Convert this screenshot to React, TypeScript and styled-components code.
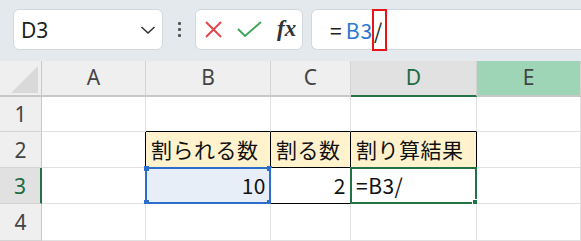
import React from "react";
import styled, { createGlobalStyle } from "styled-components";

const Global = createGlobalStyle`
  html, body { margin: 0; padding: 0; background: #fff; }
  body { width: 581px; height: 241px; overflow: hidden; font-family: "Noto Sans CJK JP", "Noto Sans", sans-serif; }
`;

const Page = styled.div`
  width: 581px;
  height: 241px;
  overflow: hidden;
  display: flex;
  flex-direction: column;
`;

const Toolbar = styled.div`
  height: 61px;
  flex: none;
  box-sizing: border-box;
  background: #e3e9ec;
  display: flex;
  align-items: flex-start;
  padding: 9px 0 0 13px;
`;

const Box = styled.div<{ $w: number }>`
  box-sizing: border-box;
  width: ${(p) => p.$w}px;
  height: 41px;
  flex: none;
  background: #fff;
  border: 1px solid #d3d8dc;
  border-radius: 6px;
  display: flex;
  align-items: center;
`;

const NameText = styled.span`
  flex: 1;
  padding-left: 7px;
  font-family: "Noto Sans", sans-serif;
  font-size: 21px;
  color: #222;
`;

const Chevron = styled.svg`
  margin-right: 6px;
`;

const Dots = styled.div`
  width: 3px;
  margin: 13px 14px 0 15px;
  display: flex;
  flex-direction: column;
  gap: 3px;
  span {
    width: 3px;
    height: 3px;
    background: #555;
    border-radius: 1px;
  }
`;

const FxGroup = styled(Box)`
  padding-left: 9px;
`;

const FxText = styled.span`
  font-family: "Liberation Serif", serif;
  font-style: italic;
  font-weight: bold;
  font-size: 23px;
  color: #333;
  margin-left: 14px;
  margin-top: -2px;
`;

const Formula = styled(Box)`
  margin-left: 8px;
  padding-left: 18px;
  border-right: none;
  border-radius: 6px 0 0 6px;
  font-size: 21px;
  letter-spacing: 1px;
  color: #222;
`;

const Eq = styled.span`
  padding-right: 3px;
`;

const Ref = styled.span`
  color: #2a78cf;
`;

const Caret = styled.span`
  position: relative;
  align-self: stretch;
  display: flex;
  align-items: center;
  padding: 0 4px 0 2px;
  margin-left: -1px;
  &::after {
    content: "";
    position: absolute;
    left: 0;
    right: 0;
    top: -1px;
    bottom: -2px;
    border: 2px solid #e8141b;
  }
`;

const Grid = styled.div`
  display: grid;
  grid-template-columns: 42px 104px 125px 80px 126px 1fr;
  grid-template-rows: 36px 35px 36px 36px 37px;
`;

const Corner = styled.div`
  background: #efefef;
  border-right: 1px solid #c8c8c8;
  border-bottom: 2px solid #c8c8c8;
  box-sizing: border-box;
  position: relative;
  &::after {
    content: "";
    position: absolute;
    right: 3px;
    bottom: 2px;
    width: 27px;
    height: 27px;
    background: #d9d9d9;
    clip-path: polygon(100% 0, 100% 100%, 0 100%);
  }
`;

const ColHead = styled.div<{ $state?: "active" | "hover" }>`
  box-sizing: border-box;
  display: flex;
  align-items: center;
  justify-content: center;
  font-family: "Noto Sans", sans-serif;
  font-size: 21px;
  color: ${(p) => (p.$state === "active" ? "#1d6b42" : "#444")};
  background: ${(p) =>
    p.$state === "active" ? "#e1e1e1" : p.$state === "hover" ? "#9fd5b7" : "#efefef"};
  border-right: 1px solid #d4d4d4;
  border-bottom: 2px solid ${(p) => (p.$state === "active" ? "#217346" : "#c8c8c8")};
  padding-bottom: 2px;
`;

const RowHead = styled.div<{ $active?: boolean }>`
  box-sizing: border-box;
  display: flex;
  align-items: center;
  justify-content: center;
  font-family: "Noto Sans", sans-serif;
  font-size: 21px;
  color: ${(p) => (p.$active ? "#1d6b42" : "#444")};
  background: ${(p) => (p.$active ? "#e1e1e1" : "#efefef")};
  border-right: ${(p) => (p.$active ? "2px solid #217346" : "1px solid #c8c8c8")};
  border-bottom: 1px solid #d4d4d4;
`;

const Cell = styled.div<{ $r?: string; $b?: string; $bg?: string; $right?: boolean }>`
  position: relative;
  box-sizing: border-box;
  border-right: 1px solid ${(p) => p.$r ?? "#e1e1e1"};
  border-bottom: 1px solid ${(p) => p.$b ?? "#e1e1e1"};
  background: ${(p) => p.$bg ?? "#fff"};
  display: flex;
  align-items: center;
  justify-content: ${(p) => (p.$right ? "flex-end" : "flex-start")};
  padding: 0 4px 1px 5px;
  font-size: 21px;
  letter-spacing: 0.5px;
  color: #111;
  white-space: nowrap;
`;

const Selection = styled.div`
  position: absolute;
  inset: -1px;
  border: 2px solid #2d6ecb;
  pointer-events: none;
  span {
    position: absolute;
    width: 5px;
    height: 5px;
    background: #2d6ecb;
  }
`;

const Active = styled.div`
  position: absolute;
  inset: -1px;
  border: 2px solid #217346;
  pointer-events: none;
`;

const FillHandle = styled.span`
  position: absolute;
  right: -4px;
  bottom: -4px;
  width: 5px;
  height: 5px;
  background: #217346;
  border: 1px solid #fff;
`;

const K = "#000";
const HDR = "#fff2cc";

export default function App() {
  return (
    <Page>
      <Global />
      <Toolbar>
        <Box $w={150}>
          <NameText>D3</NameText>
          <Chevron width="16" height="10" viewBox="0 0 16 10">
            <path d="M1.5 2 L8 8 L14.5 2" fill="none" stroke="#333" strokeWidth="1.6" />
          </Chevron>
        </Box>
        <Dots>
          <span />
          <span />
          <span />
        </Dots>
        <FxGroup $w={108}>
          <svg width="17" height="17" viewBox="0 0 17 17">
            <path d="M1 1 L16 16 M16 1 L1 16" stroke="#e5484d" strokeWidth="2" fill="none" />
          </svg>
          <svg width="26" height="17" viewBox="0 0 26 17" style={{ marginLeft: 15 }}>
            <path d="M1 8 L8 15 L24 1" stroke="#3ea85a" strokeWidth="2" fill="none" />
          </svg>
          <FxText>fx</FxText>
        </FxGroup>
        <Formula $w={290}>
          <Eq>=</Eq>
          <Ref>B3</Ref>
          <Caret>/</Caret>
        </Formula>
      </Toolbar>
      <Grid>
        <Corner />
        <ColHead>A</ColHead>
        <ColHead>B</ColHead>
        <ColHead>C</ColHead>
        <ColHead $state="active">D</ColHead>
        <ColHead $state="hover">E</ColHead>

        <RowHead>1</RowHead>
        <Cell />
        <Cell $b={K} />
        <Cell $b={K} />
        <Cell $b={K} />
        <Cell />

        <RowHead>2</RowHead>
        <Cell $r={K} />
        <Cell $r={K} $b={K} $bg={HDR}>割られる数</Cell>
        <Cell $r={K} $b={K} $bg={HDR}>割る数</Cell>
        <Cell $r={K} $b={K} $bg={HDR}>割り算結果</Cell>
        <Cell />

        <RowHead $active>3</RowHead>
        <Cell $r={K} />
        <Cell $r={K} $b={K} $bg="#e8eef8" $right>
          10
          <Selection>
            <span style={{ left: -3, top: -3 }} />
            <span style={{ right: -3, top: -3 }} />
            <span style={{ left: -3, bottom: -3 }} />
            <span style={{ right: -3, bottom: -3 }} />
          </Selection>
        </Cell>
        <Cell $r={K} $b={K} $right>2</Cell>
        <Cell $r={K} $b={K}>
          =B3/
          <Active>
            <FillHandle />
          </Active>
        </Cell>
        <Cell />

        <RowHead>4</RowHead>
        <Cell />
        <Cell />
        <Cell />
        <Cell />
        <Cell />
      </Grid>
    </Page>
  );
}
